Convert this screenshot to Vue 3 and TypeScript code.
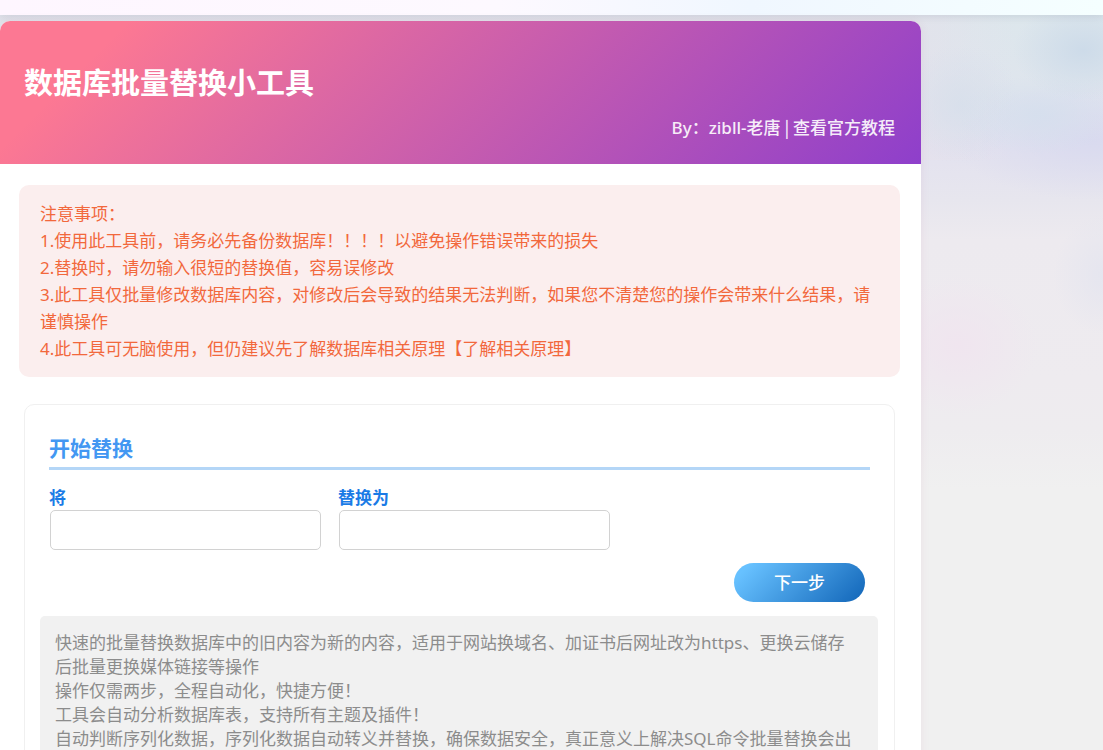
<script setup lang="ts">
import { ref } from 'vue'

const notices: string[] = [
  '1.使用此工具前，请务必先备份数据库！！！！以避免操作错误带来的损失',
  '2.替换时，请勿输入很短的替换值，容易误修改',
  '3.此工具仅批量修改数据库内容，对修改后会导致的结果无法判断，如果您不清楚您的操作会带来什么结果，请谨慎操作',
]

const features: string[] = [
  '快速的批量替换数据库中的旧内容为新的内容，适用于网站换域名、加证书后网址改为https、更换云储存后批量更换媒体链接等操作',
  '操作仅需两步，全程自动化，快捷方便！',
  '工具会自动分析数据库表，支持所有主题及插件！',
  '自动判断序列化数据，序列化数据自动转义并替换，确保数据安全，真正意义上解决SQL命令批量替换会出',
]

const search = ref('')
const replacement = ref('')
</script>

<template>
  <div class="page">
    <header class="topbar"></header>
    <div class="layout">
      <main class="card">
        <div class="banner">
          <h1>数据库批量替换小工具</h1>
          <p class="byline">By：zibll-<a href="#author">老唐</a><span class="separator"> | </span><a href="#guide">查看官方教程</a></p>
        </div>

        <section class="notice">
          <p>注意事项：</p>
          <p v-for="item in notices" :key="item">{{ item }}</p>
          <p>4.此工具可无脑使用，但仍建议先了解数据库相关原理<a href="#principle">【了解相关原理】</a></p>
        </section>

        <form class="panel" @submit.prevent>
          <h2>开始替换</h2>
          <div class="fields">
            <div class="field">
              <label for="search">将</label>
              <input id="search" v-model="search" type="text" />
            </div>
            <div class="field">
              <label for="replacement">替换为</label>
              <input id="replacement" v-model="replacement" type="text" />
            </div>
          </div>
          <div class="actions">
            <button type="submit">下一步</button>
          </div>
          <div class="about">
            <p v-for="item in features" :key="item">{{ item }}</p>
          </div>
        </form>
      </main>
    </div>
  </div>
</template>

<style>
body {
  margin: 0;
}
</style>

<style scoped>
.page {
  display: flex;
  flex-direction: column;
  height: 100vh;
  overflow: hidden;
  font-family: "Noto Sans", "Noto Sans CJK SC", sans-serif;
  font-size: 17px;
  line-height: 24px;
  background:
    radial-gradient(ellipse 70px 50px at calc(100% - 20px) 50px, #cddbe9 0%, #cddbe999 40%, #cddbe900 100%),
    radial-gradient(ellipse 80px 40px at calc(100% - 65px) 115px, #d4dfedcc 0%, #d4dfed00 100%),
    radial-gradient(ellipse 140px 60px at calc(100% - 10px) 140px, #d9daef 0%, #d9daef00 100%),
    radial-gradient(ellipse 60px 60px at calc(100% - 142px) 105px, #d6dfebcc 0%, #d6dfeb00 100%),
    radial-gradient(ellipse 50px 60px at 100% 275px, #e1e3efaa 0%, #e1e3ef00 100%),
    radial-gradient(ellipse 80px 70px at calc(100% - 145px) 345px, #f0e5ef 0%, #f0e5ef00 100%),
    linear-gradient(to right, #e6e0eb80 84%, #e6e0eb00 92%) top / 100% 160px no-repeat,
    linear-gradient(to bottom, #dce7ec 0, #dfe5ed 90px, #e3e2ef 150px, #e7e6ee 200px, #edeaef 240px, #eeebef 380px, #eeecef 430px, #f0f0f0 490px, #f0f0f0 100%);
}

.topbar {
  flex: none;
  height: 15px;
  background: linear-gradient(to right, #fef6ff 0%, #fdf9ff 45%, #f0f7ff 68%, #f5ffff 100%);
  box-shadow: 0 1px 8px rgba(40, 50, 70, 0.12);
}

.layout {
  display: grid;
  grid-template-columns: minmax(0, 1fr) 182px;
  flex: 1;
  min-height: 0;
  padding-top: 6px;
}

.card {
  border-radius: 10px 10px 0 0;
  background: #fff;
  box-shadow: 0 0 10px rgba(190, 70, 120, 0.08);
}

.banner {
  box-sizing: border-box;
  height: 143px;
  padding: 41px 26px 24px 24px;
  border-radius: 10px 10px 0 0;
  color: #fff;
  background: linear-gradient(135deg, #fc7893 12%, #8e3fcb 100%);
}

h1,
h2,
p {
  margin: 0;
}

h1 {
  font-size: 29px;
  line-height: 42px;
  font-weight: 700;
}

.byline {
  margin-top: 11px;
  text-align: right;
  font-weight: 500;
  opacity: 0.9;
}

.separator {
  font-family: "Noto Sans CJK SC", sans-serif;
}

a {
  color: inherit;
  text-decoration: none;
}

.notice {
  margin: 21px 21px 0 19px;
  padding: 15px 21px;
  border-radius: 10px;
  line-height: 27px;
  color: #f2683c;
  background: #fbeeee;
}

.panel {
  margin: 27px 26px 0 24px;
  padding: 28px 24px 0;
  border: 1px solid #f0f0f0;
  border-radius: 10px;
}

h2 {
  padding-bottom: 3px;
  border-bottom: 3px solid #b4d6f7;
  font-size: 21px;
  line-height: 31px;
  font-weight: 700;
  color: #4397f2;
}

.fields {
  display: flex;
  gap: 17px;
  padding-top: 16px;
}

.field {
  display: flex;
  flex-direction: column;
  width: 272px;
}

label {
  font-weight: 700;
  color: #1a7be6;
}

input {
  box-sizing: border-box;
  height: 40px;
  margin-left: 1px;
  padding: 0 12px;
  border: 1px solid #d2d2d2;
  border-radius: 5px;
  font: inherit;
  background: #fff;
}

.actions {
  display: flex;
  justify-content: flex-end;
  padding: 13px 5px 14px;
}

button {
  width: 131px;
  height: 39px;
  padding: 0;
  border: 0;
  border-radius: 20px;
  font: inherit;
  font-weight: 500;
  color: #fff;
  background: linear-gradient(135deg, #67c1ff 10%, #1165b8 100%);
}

.about {
  margin: 0 -8px 0 -9px;
  padding: 15px 22px 15px 15px;
  border-radius: 5px;
  color: #8c8c8c;
  background: #f1f1f1;
}
</style>
